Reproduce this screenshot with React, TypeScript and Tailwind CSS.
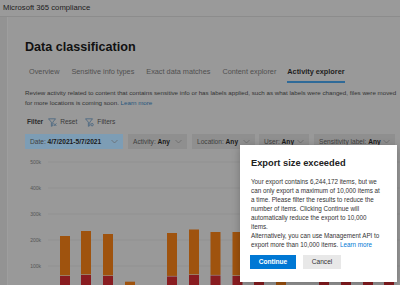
import React from "react";

const font = { fontFamily: '"Liberation Sans", Arial, sans-serif' };

function Chevron() {
  return (
    <svg width="7" height="5" viewBox="0 0 7 5" className="shrink-0">
      <path d="M0.5 1 L3.5 4 L6.5 1" fill="none" stroke="#666" strokeWidth="0.7" />
    </svg>
  );
}

function Funnel({ variant }: { variant: "reset" | "filters" }) {
  return (
    <svg width="9" height="9" viewBox="0 0 9 9" className="shrink-0">
      <path d="M0.5 0.8 H7.5 L4.8 4.2 V7.6 L3.4 8.3 V4.2 Z" fill="none" stroke="#44637f" strokeWidth="0.8" strokeLinejoin="round" />
      {variant === "reset" ? (
        <path d="M5.8 5.4 L8.4 8 M8.4 5.4 L5.8 8" stroke="#44637f" strokeWidth="0.8" />
      ) : (
        <circle cx="7.1" cy="6.7" r="1.2" fill="none" stroke="#44637f" strokeWidth="0.8" />
      )}
    </svg>
  );
}

function FilterButton({ label, value, w, active }: { label: string; value: string; w: string; active?: boolean }) {
  return (
    <div
      className={`${w} h-[15px] flex items-center justify-between px-[5px] text-[6.6px] ${active ? "bg-[#7d9db5]" : "bg-[#8f8f8f]"}`}
    >
      <span className="whitespace-nowrap">
        <span className="text-[#404040]">{label}</span>{" "}
        <span className="font-bold text-[#1a1a1a]">{value}</span>
      </span>
      <Chevron />
    </div>
  );
}

const bars: { x: number; top: number; red: number }[] = [
  { x: 60, top: 236, red: 276 },
  { x: 81, top: 231, red: 275 },
  { x: 103, top: 234, red: 276 },
  { x: 125, top: 281.7, red: 300 },
  { x: 167, top: 233, red: 276.5 },
  { x: 189, top: 229.5, red: 275 },
  { x: 210.5, top: 232, red: 275.5 },
  { x: 232.5, top: 232, red: 276 },
  { x: 254, top: 230, red: 276 },
  { x: 276, top: 281.7, red: 300 },
  { x: 319, top: 230, red: 276 },
  { x: 341, top: 230, red: 276 },
  { x: 363, top: 230, red: 276 },
  { x: 384, top: 230, red: 276 },
];

function Chart() {
  const ox = 8;
  const oy = 155;
  const grid = [
    { y: 162, l: "500k" },
    { y: 188, l: "400k" },
    { y: 214, l: "300k" },
    { y: 240, l: "200k" },
    { y: 266, l: "100k" },
  ];
  return (
    <svg width="392" height="130" viewBox="0 0 392 130" className="block">
      {grid.map((g) => (
        <g key={g.l}>
          <line x1={48 - ox} x2={392} y1={g.y - oy} y2={g.y - oy} stroke="#8f8f8f" strokeWidth="0.7" />
          <text x={41 - ox} y={g.y - oy + 1.8} textAnchor="end" fontSize="5" fill="#555" style={font}>
            {g.l}
          </text>
        </g>
      ))}
      {bars.map((b, i) => (
        <g key={i}>
          <rect x={b.x - ox} y={b.top - oy} width="10" height={b.red - b.top - 0.6} fill="#9f530e" />
          <rect x={b.x - ox} y={b.red - oy} width="10" height={140} fill="#891c20" />
        </g>
      ))}
    </svg>
  );
}

export default function App() {
  return (
    <div className="relative w-[400px] h-[285px] overflow-hidden bg-[#999999] text-[#222]" style={font}>
      {/* header */}
      <div className="h-[17px] flex items-center pl-[3px] border-b border-[#8c8c8c] bg-[#9a9a9a]">
        <span className="text-[7.7px] text-[#1c1c1c] whitespace-nowrap">Microsoft 365 compliance</span>
      </div>
      <div className="flex h-[268px]">
        <div className="w-[8px] shrink-0 bg-[#939393] border-r border-[#9e9e9e]" />
        <div className="flex-1 flex flex-col min-w-0">
          <div className="pl-[17px]">
            <div className="mt-[22px] h-[16px] leading-[16px] text-[12.6px] font-bold text-[#111] whitespace-nowrap">
              Data classification
            </div>
            {/* tabs */}
            <div className="mt-[11px] flex text-[7.3px] text-[#505050] whitespace-nowrap">
              {["Overview", "Sensitive info types", "Exact data matches", "Content explorer"].map((t, i) => (
                <div key={t} className={`flex flex-col ${i === 0 ? "ml-[4px]" : "ml-[12px]"}`}>
                  <div className="h-[12px] leading-[12px]">{t}</div>
                </div>
              ))}
              <div className="flex flex-col ml-[11px]">
                <div className="h-[12px] leading-[12px] text-[#1e1e1e] font-semibold">Activity explorer</div>
                <div className="mt-[3px] h-[2px] bg-[#2f6a98]" />
              </div>
            </div>
            {/* description */}
            <div className="mt-[5px] text-[6.2px] leading-[10px] text-[#333] whitespace-nowrap">
              <div>
                Review activity related to content that contains sensitive info or has labels applied, such as what labels were changed, files were moved
              </div>
              <div>
                for more locations is coming soon. <span className="text-[#24557d]">Learn more</span>
              </div>
            </div>
            {/* filter row */}
            <div className="mt-[9px] h-[10px] flex items-center text-[6.6px] whitespace-nowrap">
              <span className="ml-[2px] text-[#2a2a2a] font-semibold">Filter</span>
              <span className="ml-[5px]"><Funnel variant="reset" /></span>
              <span className="ml-[3px] text-[#3a3a3a]">Reset</span>
              <span className="ml-[8px]"><Funnel variant="filters" /></span>
              <span className="ml-[3px] text-[#3a3a3a]">Filters</span>
            </div>
            {/* filter buttons */}
            <div className="mt-[7px] flex">
              <FilterButton label="Date:" value="4/7/2021-5/7/2021" w="w-[98px]" active />
              <div className="ml-[5px]"><FilterButton label="Activity:" value="Any" w="w-[59px]" /></div>
              <div className="ml-[5px]"><FilterButton label="Location:" value="Any" w="w-[63px]" /></div>
              <div className="ml-[4px]"><FilterButton label="User:" value="Any" w="w-[50px]" /></div>
              <div className="ml-[5px]"><FilterButton label="Sensitivity label:" value="Any" w="w-[81px]" /></div>
            </div>
          </div>
          <div className="mt-[6px]">
            <Chart />
          </div>
        </div>
      </div>

      {/* dialog */}
      <div className="absolute left-[240px] top-[145px] w-[157px] h-[137px] bg-white shadow-[0_2px_8px_rgba(0,0,0,0.25)] px-[11px] pt-[12px]">
        <div className="h-[12px] leading-[12px] text-[9.3px] font-semibold text-[#222] whitespace-nowrap">Export size exceeded</div>
        <div className="mt-[8px] text-[6.3px] leading-[9px] text-[#333] whitespace-nowrap">
          <div>Your export contains 6,244,172 items, but we</div>
          <div>can only export a maximum of 10,000 items at</div>
          <div>a time. Please filter the results to reduce the</div>
          <div>number of items. Clicking Continue will</div>
          <div>automatically reduce the export to 10,000</div>
          <div>items.</div>
          <div>Alternatively, you can use Management API to</div>
          <div>
            export more than 10,000 items. <span className="text-[#0078d4]">Learn more</span>
          </div>
        </div>
        <div className="mt-[6px] flex">
          <div className="w-[46px] h-[14px] ml-[-1px] bg-[#0078d4] text-white text-[6.6px] font-semibold flex items-center justify-center">
            Continue
          </div>
          <div className="ml-[7px] w-[38px] h-[14px] bg-[#e8e8e8] text-[#333] text-[6.6px] flex items-center justify-center">
            Cancel
          </div>
        </div>
      </div>
    </div>
  );
}
